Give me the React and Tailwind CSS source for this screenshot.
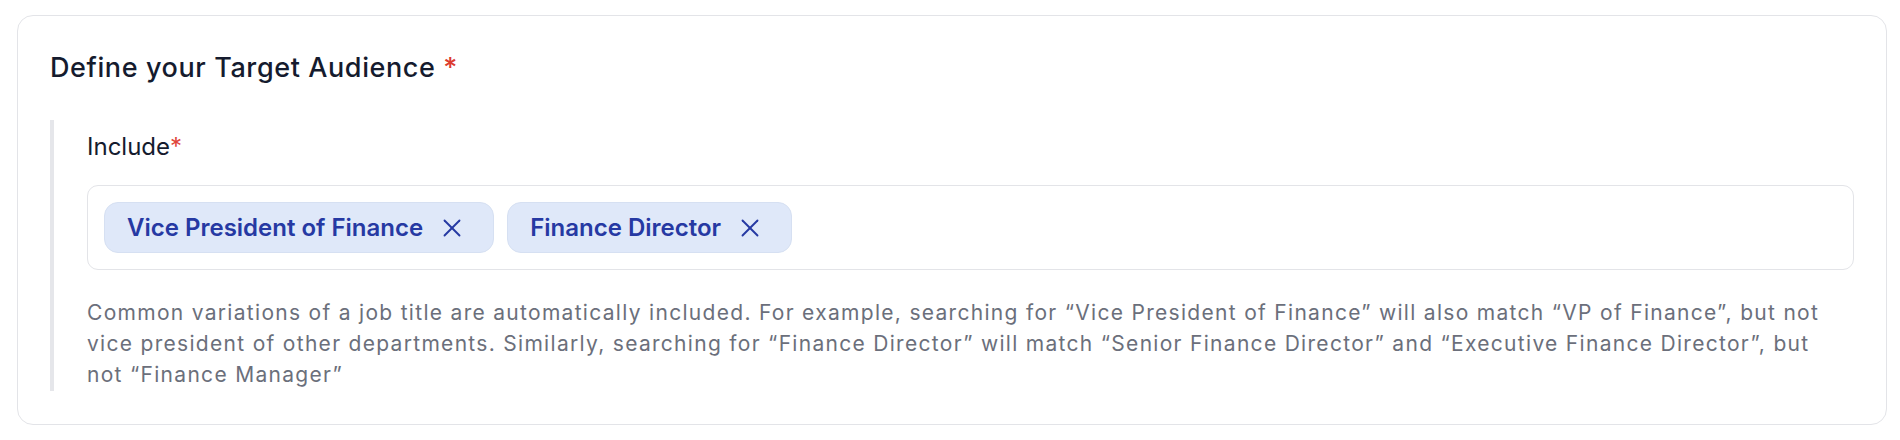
import { X } from "lucide-react";

const TAGS = ["Vice President of Finance", "Finance Director"];

const Tag = ({ label }) => (
  <div className="flex items-center h-[51px] pl-[22px] pr-[26px] gap-[14px] rounded-[14px] border border-[#d6e0f2] bg-[#dfe8f9]">
    <span className="text-[24px] leading-8 font-semibold text-[#2639a3]">{label}</span>
    <X size={30} strokeWidth={1.5} className="text-[#2639a3]" />
  </div>
);

export default function App() {
  return (
    <div className="w-[1900px] h-[440px] bg-white pt-[15px] pl-[17px]" style={{ fontFamily: "Inter, 'Noto Sans', sans-serif" }}>
      <div className="w-[1870px] h-[410px] rounded-[16px] border-[1.5px] border-[#e3e4e8] pt-[34px] px-[32px]">
        {/* Title */}
        <h2 className="text-[27px] leading-9 tracking-[0.6px] font-medium text-[#151b2e]">
          Define your Target Audience <span className="text-[#dc3b2f]">*</span>
        </h2>

        {/* Include section */}
        <div className="mt-[34px] border-l-4 border-[#e5e6ea] pl-[33px] pt-[11px] pb-[1px]">
          <label className="block text-[24px] leading-8 text-[#151b2e]">
            Include<span className="text-[#e0453a]">*</span>
          </label>

          <div className="mt-[22px] flex flex-wrap gap-[13px] rounded-[11px] border-[1.5px] border-[#e3e4e8] p-4">
            {TAGS.map((t) => (
              <Tag key={t} label={t} />
            ))}
          </div>

          <p className="mt-[27px] pr-[24px] text-[21px] leading-[31px] tracking-[1.3px] text-[#6b6f7b]">
            Common variations of a job title are automatically included. For example, searching for “Vice President of Finance” will also match “VP of Finance”, but not vice president of other departments. Similarly, searching for “Finance Director” will match “Senior Finance Director” and “Executive Finance Director”, but not “Finance Manager”
          </p>
        </div>
      </div>
    </div>
  );
}
